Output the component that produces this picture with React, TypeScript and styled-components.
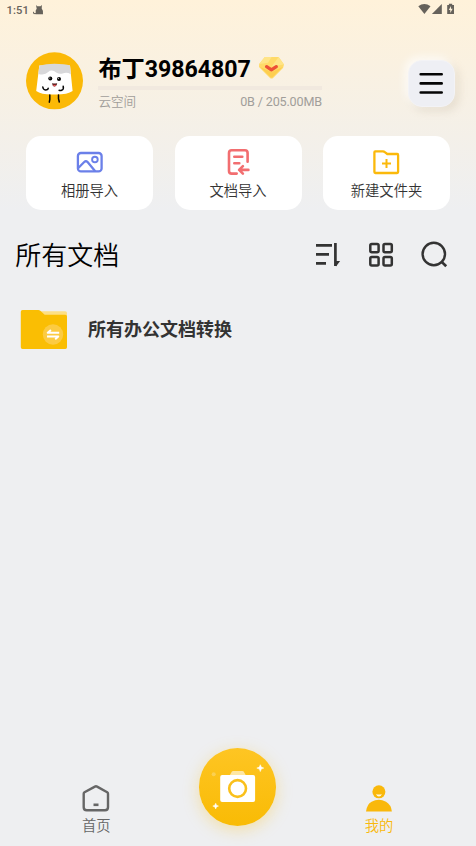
import React from 'react';
import styled, { createGlobalStyle } from 'styled-components';

const GlobalStyle = createGlobalStyle`
  * { box-sizing: border-box; }
  html, body { margin: 0; padding: 0; background: #eeeff1; }
  body { font-family: Roboto, "Noto Sans CJK SC", sans-serif; overflow: hidden; }
  svg { display: block; flex: none; }
`;

const Screen = styled.main`
  display: flex;
  flex-direction: column;
  width: 476px;
  height: 846px;
  overflow: hidden;
  background: linear-gradient(180deg, #fff2da 0px, #eeeff1 210px);
`;

const StatusBar = styled.div`
  display: flex;
  justify-content: space-between;
  height: 20px;
  padding: 0 20px 0 6.5px;
  color: #66625b;
`;

const StatusTime = styled.div`
  display: flex;
  gap: 4px;
  font-size: 11.2px;
  font-weight: 500;
  letter-spacing: 0.1px;
  line-height: 21px;
`;

const Profile = styled.header`
  display: flex;
  height: 116px;
  padding: 32px 21px 0 26px;
`;

const Account = styled.section`
  width: 223.6px;
  margin-left: 15.4px;
`;

const NameRow = styled.div`
  display: flex;
  height: 34px;
  gap: 7px;
`;

const UserName = styled.h1`
  margin: 0;
  font-size: 23.2px;
  font-weight: 700;
  letter-spacing: -0.04px;
  line-height: 34px;
  white-space: nowrap;
  color: #000;
`;

const StorageTrack = styled.div`
  height: 4px;
  background: #f1e9df;
`;

const StorageInfo = styled.div`
  display: flex;
  justify-content: space-between;
  margin-top: 2px;
  font-size: 12.6px;
  line-height: 20px;
  color: #a19e9a;
`;

const StorageLabel = styled.span`
  font-family: "Noto Sans CJK SC", sans-serif;
  font-weight: 350;
  line-height: 18px;
`;

const StorageValue = styled.span`
  letter-spacing: -0.16px;
`;

const MenuButton = styled.button`
  display: flex;
  align-items: center;
  justify-content: center;
  width: 47px;
  height: 47px;
  margin: 8px 0 0 auto;
  padding: 0;
  border: 1px solid #f3f3f6;
  border-radius: 14px;
  background: #eeeff4;
  box-shadow: -3px -3px 8px rgba(255, 255, 255, 0.75), 4px 4px 9px rgba(180, 165, 140, 0.24);
`;

const Actions = styled.section`
  display: grid;
  grid-template-columns: repeat(3, 1fr);
  gap: 21.5px;
  padding: 0 26px;
`;

const ActionCard = styled.button`
  display: flex;
  flex-direction: column;
  align-items: center;
  height: 74px;
  padding: 10px 0 0;
  border: 0;
  border-radius: 15px;
  background: #fff;
  font-family: "Noto Sans CJK SC", sans-serif;
  font-size: 14.3px;
  font-weight: 350;
  line-height: 20px;
  color: #333;
`;

const ActionLabel = styled.span`
  margin-top: 2px;
`;

const ListHeader = styled.div`
  display: flex;
  align-items: center;
  justify-content: space-between;
  height: 40px;
  margin-top: 25px;
  padding: 0 26px 0 15.3px;
`;

const ListTitle = styled.h2`
  margin: 0;
  padding-bottom: 3px;
  font-family: "Noto Sans CJK SC", sans-serif;
  font-size: 26px;
  font-weight: 350;
  line-height: 40px;
  color: #000;
`;

const Tools = styled.div`
  display: flex;
  align-items: center;
  gap: 25px;
`;

const FileRow = styled.div`
  display: flex;
  align-items: center;
  gap: 20px;
  height: 60px;
  margin-top: 24px;
  padding-left: 20px;
`;

const FileName = styled.span`
  padding-top: 1px;
  font-size: 18px;
  font-weight: 700;
  line-height: 28px;
  color: #333;
`;

const BottomNav = styled.nav`
  display: grid;
  grid-template-columns: 192.6px 90.2px 192.4px;
  height: 98px;
  margin-top: auto;
`;

const Tab = styled.div<{ $active?: boolean }>`
  display: flex;
  flex-direction: column;
  align-items: center;
  padding-top: 34px;
  font-family: "Noto Sans CJK SC", sans-serif;
  font-size: 14.3px;
  font-weight: 350;
  line-height: 22px;
  color: ${({ $active }) => ($active ? '#f9b80b' : '#666')};
`;

const CameraButton = styled.button`
  justify-self: center;
  width: 77.5px;
  height: 77.5px;
  padding: 0;
  border: 0;
  border-radius: 50%;
  background: linear-gradient(180deg, #fec523, #f9bb05);
  box-shadow: 0 4px 16px rgba(249, 199, 60, 0.4);
`;

const CatIcon = () => (
  <svg width="12" height="20" viewBox="33 0 12 20">
    <path d="M35.7 14.2v-3.7l1-1.7-.7-3.8 1.3 1.2h3.2l1.4-1.3-.2 3.7 1.2 2.1.1 3.5Z" fill="#66625b" />
    <path d="M36 13.6h-2.3l-.2-1.8" fill="none" stroke="#66625b" />
  </svg>
);

const SystemIcons = () => (
  <svg width="38" height="20" viewBox="418 0 38 20" fill="#66625b">
    <path d="M418.3 6.3q6-4.5 12.2 0l-6.1 7.8Z" />
    <path d="M441.8 4v10h-9.9Z" />
    <path d="M447.2 5h1.7V3.8h3.3V5h1.8v9.1h-6.8Z" />
    <path d="m451 6-2.2 4h1.5v3l2.4-4.3H451Z" fill="#fff2da" />
  </svg>
);

const Avatar = () => (
  <svg width="57" height="58" viewBox="26 52 57 58">
    <circle cx="54.5" cy="80.8" r="28.5" fill="#fbb907" />
    <path d="M39.3 65.5 36.2 91q5.5 4 18.6 3.5 12.5.2 17.8-3.5L70 65.5Z" fill="#fff" />
    <path d="M39.3 65.7q6.5-2 15.2-2 10.4 0 15.5 1.8l.8 8.7q-4-2.5-8.2-.7-3 .8-6-.7-5-4-8.4-.7-3.5 3.6-9.8 1.8Z" fill="#d8d8da" />
    <circle cx="50.3" cy="78.6" r="2" fill="#050505" /><circle cx="59" cy="79" r="2" fill="#050505" />
    <circle cx="49.8" cy="78" r=".55" fill="#fff" /><circle cx="58.4" cy="78.3" r=".55" fill="#fff" />
    <path d="M52 83.2q2.8.7 5.2 0-.8 3.4-2.8 3.3-2-.2-2.4-3.3Z" fill="#441111" />
    <path d="M52.8 84.7h3.5q-.8 1.8-1.9 1.8-1 0-1.6-1.8Z" fill="#f05a5c" />
    <path d="M42.8 87q.4 2.8 2.6 3 2.8-.1 2.8-1.7M63.2 86.2q.8 3.2-1.6 4-1.3.5-2.5 0M49.8 95v4.5l-.5 2.7M58.5 95v3.7l.8 3.3" fill="none" stroke="#080808" strokeWidth="1.5" strokeLinecap="round" />
  </svg>
);

const GemIcon = () => (
  <svg width="27" height="34" viewBox="258 52 27 34">
    <path d="m264.8 57 13.8-.1 5.4 7.5-1 3.7-9.9 9.8q-1.6 1.2-3.1 0L259 67l.2-3Z" fill="#ffda68" />
    <path d="m264.8 57-5.6 7 8.8-1.3 3.6-5.7Zm13.8 0-7 9.5 12.4-2.1Z" fill="#ffe487" />
    <path d="m260 67 11.5 5.1 11.3-5-10 9.8q-1.2 1-2.4 0Z" fill="#fdce50" />
    <path d="m266.6 66.7 4.8 3.2 4.9-3.2" fill="none" stroke="#ed5036" strokeWidth="3.3" strokeLinecap="round" strokeLinejoin="round" />
  </svg>
);

const MenuIcon = () => (
  <svg width="25" height="24" viewBox="0.3 0.8 25 24" fill="none" stroke="#050505" strokeWidth="2.6" strokeLinecap="round">
    <path d="M2 3h21M2 12.2h21M2 21.3h21" />
  </svg>
);

const AlbumIcon = () => (
  <svg width="32" height="32" viewBox="74 146 32 32" fill="none" stroke="#6b80e9" strokeWidth="2.3">
    <rect x="77.9" y="153" width="23.7" height="18.4" rx="3" />
    <circle cx="94.9" cy="159.5" r="2.8" strokeWidth="1.9" />
    <path d="m78.3 168 5.9-6q1.7-1.5 3.4 0l7.6 9.2" />
  </svg>
);

const DocumentIcon = () => (
  <svg width="32" height="32" viewBox="222 146 32 32" fill="none" stroke="#f26e70" strokeWidth="2.6" strokeLinecap="round" strokeLinejoin="round">
    <path d="M247.6 161.7V153q0-2.7-2.7-2.7h-13.2q-2.7 0-2.7 2.7v17.9q0 2.7 2.7 2.7h5M234.3 156.7h8M234.3 163.2h5M248.4 169.9h-9.2m3.7-3.8-3.8 3.8 3.8 3.7" />
  </svg>
);

const NewFolderIcon = () => (
  <svg width="32" height="32" viewBox="371 146 32 32" fill="none" stroke="#fbb90b" strokeWidth="2.3" strokeLinejoin="round">
    <path d="M375.2 151.3h7.8q1 0 1.8.8l2.5 1.9h10q.8 0 .8.9v17.1q0 1-1 1h-21.7q-1 0-1-1V152.3q0-1 .8-1Z" />
    <path d="M386.5 158.9v9M382 163.4h9" strokeWidth="2" />
  </svg>
);

const SortIcon = () => (
  <svg width="28" height="28" viewBox="314 241 28 28" fill="none" stroke="#333" strokeWidth="2.7">
    <path d="M316 245.4h16M316 254.4h13M316 263.4h10M335.4 243v23" />
    <path d="m336 266.6 4.1-5.5h-4.6Z" fill="#333" stroke="none" />
  </svg>
);

const GridIcon = () => (
  <svg width="28" height="28" viewBox="367 241 28 28" fill="none" stroke="#333" strokeWidth="2.5">
    <rect x="370.3" y="244" width="8.3" height="8.3" rx="1.5" /><rect x="383.5" y="244" width="8.3" height="8.3" rx="1.5" />
    <rect x="370.3" y="257.1" width="8.3" height="8.3" rx="1.5" /><rect x="383.5" y="257.1" width="8.3" height="8.3" rx="1.5" />
  </svg>
);

const SearchIcon = () => (
  <svg width="30" height="28" viewBox="420 241 30 28" fill="none" stroke="#333" strokeWidth="2.4">
    <circle cx="433.8" cy="254" r="11.2" /><path d="m441.4 261.6 4.8 4.7" strokeWidth="2.7" />
  </svg>
);

const FolderIcon = () => (
  <svg width="48" height="40" viewBox="20 309 48 40">
    <path d="M38 311.3h27.2q1.8 0 1.8 1.8V322H38Z" fill="#fddf85" />
    <path d="M22.5 310h16q.8 0 1.5.6l4.7 4.2h20.6q1.7 0 1.7 1.7v30.8q0 1.7-1.7 1.7H22.5q-1.7 0-1.7-1.7v-35.6q0-1.7 1.7-1.7Z" fill="#fabe03" />
    <circle cx="53" cy="334.5" r="10.2" fill="#fccb42" />
    <path d="M59.2 332.8H47.7l3.2-2.7M47 336.5h11.3l-3.1 2.7" fill="none" stroke="#fff" strokeWidth="1.9" strokeLinejoin="round" />
  </svg>
);

const CameraIcon = () => (
  <svg width="77.5" height="77.5" viewBox="199 748 77.5 77.5">
    <path d="m229.8 775.3 2-3.6q.4-.7 1.4-.7h9.2q1 0 1.4.7l2 3.6Z" fill="#fee7a4" />
    <rect x="220.2" y="775" width="34.9" height="27.1" rx="2" fill="#fff" />
    <circle cx="237.6" cy="788.5" r="8.4" fill="#fff" stroke="#fac01b" strokeWidth="2.6" />
    <path d="m260.3 764.7 1 2.4 2.5 1-2.5 1-1 2.5-1-2.5-2.5-1 2.5-1ZM215.7 803.2l.8 2 2 .9-2 .8-.8 2.1-.9-2.1-2-.8 2-.9Z" fill="#fff" stroke="#fff" strokeWidth=".5" />
    <circle cx="213.7" cy="774.2" r="2" fill="#fbd052" />
  </svg>
);

const HomeIcon = () => (
  <svg width="30" height="32" viewBox="81.5 781.5 30 32" fill="none" stroke="#666" strokeWidth="2.4" strokeLinejoin="round">
    <path d="M84.2 793.2q0-1 .8-1.5l10.4-5.6q1.1-.6 2.2 0l10.1 5.6q.8.5.8 1.5v13.5q0 3-3 3H87.2q-3 0-3-3Z" />
    <path d="M94 804.3h5" strokeWidth="2.6" />
  </svg>
);

const PersonIcon = () => (
  <svg width="30" height="32" viewBox="364 781.5 30 32" fill="#f9b80b">
    <circle cx="378.9" cy="791.3" r="6.5" />
    <path d="M376 793.5q2.9 1.1 5.8 0-.7 2.6-2.9 2.6-1.9 0-2.9-2.6Z" fill="#fff9df" />
    <path d="M366 811q.8-7.2 5.6-9.8 7.2-3.7 14.4 0 5.1 2.8 5.9 9.8Z" />
  </svg>
);

const actions = [
  { label: '相册导入', Icon: AlbumIcon },
  { label: '文档导入', Icon: DocumentIcon },
  { label: '新建文件夹', Icon: NewFolderIcon },
];

export default function App() {
  return (
    <>
      <GlobalStyle />
      <Screen>
        <StatusBar><StatusTime>1:51<CatIcon /></StatusTime><SystemIcons /></StatusBar>
        <Profile>
          <Avatar />
          <Account>
            <NameRow><UserName>布丁39864807</UserName><GemIcon /></NameRow>
            <StorageTrack />
            <StorageInfo><StorageLabel>云空间</StorageLabel><StorageValue>0B / 205.00MB</StorageValue></StorageInfo>
          </Account>
          <MenuButton aria-label="菜单"><MenuIcon /></MenuButton>
        </Profile>
        <Actions>
          {actions.map(({ label, Icon }) => (
            <ActionCard key={label}><Icon /><ActionLabel>{label}</ActionLabel></ActionCard>
          ))}
        </Actions>
        <ListHeader>
          <ListTitle>所有文档</ListTitle>
          <Tools><SortIcon /><GridIcon /><SearchIcon /></Tools>
        </ListHeader>
        <FileRow><FolderIcon /><FileName>所有办公文档转换</FileName></FileRow>
        <BottomNav>
          <Tab><HomeIcon /><span>首页</span></Tab>
          <CameraButton aria-label="拍照"><CameraIcon /></CameraButton>
          <Tab $active><PersonIcon /><span>我的</span></Tab>
        </BottomNav>
      </Screen>
    </>
  );
}
